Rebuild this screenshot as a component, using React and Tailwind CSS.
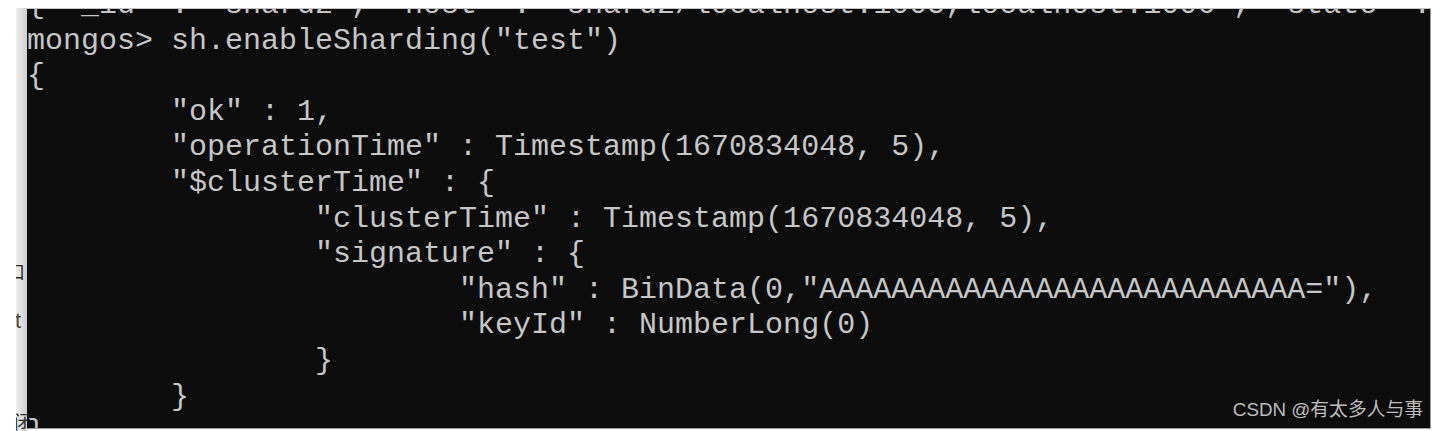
import React from "react";

const lines = [
  '{ "_id" : "shard2", "host" : "shard2/localhost:1005,localhost:1006", "state" : 1 }',
  'mongos> sh.enableSharding("test")',
  "{",
  '        "ok" : 1,',
  '        "operationTime" : Timestamp(1670834048, 5),',
  '        "$clusterTime" : {',
  '                "clusterTime" : Timestamp(1670834048, 5),',
  '                "signature" : {',
  '                        "hash" : BinData(0,"AAAAAAAAAAAAAAAAAAAAAAAAAAA="),',
  '                        "keyId" : NumberLong(0)',
  "                }",
  "        }",
  "}",
];

const App = () => {
  return (
    <div className="relative h-[431px] w-[1441px] overflow-hidden bg-white">
      <div className="flex h-full pt-[8px]">
        {/* left strip of the window behind */}
        <div className="w-[27px] shrink-0 pl-[16px]">
          <div className="relative h-full w-[11px] overflow-hidden bg-gradient-to-r from-[#efefef] to-[#cfcfcf] font-['Noto_Sans_CJK_SC',sans-serif] text-[18px] leading-[18px] text-[#2a2a2a]">
            <span className="absolute left-[-9px] top-[254px]">口</span>
            <span className="absolute left-[-1px] top-[304px] font-['Liberation_Sans',sans-serif] text-[22px] text-[#5a4a3a]">t</span>
            <span className="absolute left-[-2px] top-[404px]">闭</span>
          </div>
        </div>

        {/* console */}
        <div className="h-[421px] w-[1404px] shrink-0 overflow-hidden border-t border-r border-b border-t-[#c4c4c4] border-r-[#9a9a9a] border-b-[#9a9a9a] bg-[#0c0c0c]">
          <pre className="-mt-[21px] whitespace-pre font-['Liberation_Mono',monospace] text-[30px] leading-[35.6px] text-[#c6c6c6]">
            {lines.map((line, i) => (
              <div key={i}>{line}</div>
            ))}
          </pre>
        </div>
      </div>

      <div className="absolute bottom-[10px] right-[18px] font-['Liberation_Sans','Noto_Sans_CJK_SC',sans-serif] text-[18.8px] leading-[22px] text-[#bdbdbd]">
        CSDN @有太多人与事
      </div>
    </div>
  );
};

export default App;
